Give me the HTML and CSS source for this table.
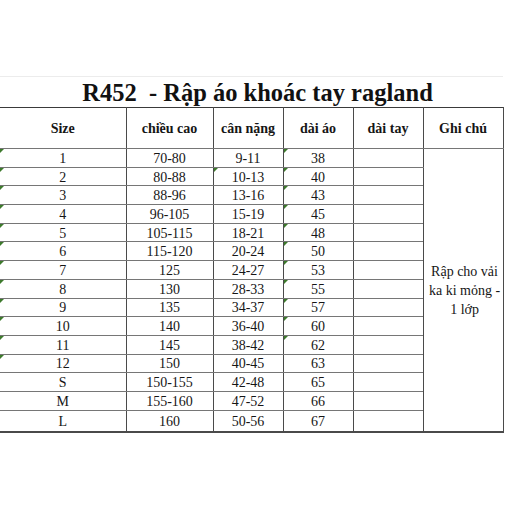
FILE: index.html
```html
<!DOCTYPE html>
<html lang="vi">
<head>
<meta charset="utf-8">
<title>R452 - Rập áo khoác tay ragland</title>
<link rel="stylesheet" href="styles.css">
</head>
<body>
<div class="sheet">
<table class="grid">
  <colgroup>
    <col class="c-size"><col class="c-h"><col class="c-w"><col class="c-a"><col class="c-t"><col class="c-n">
  </colgroup>
  <tr class="title-row"><td colspan="6" class="title">R452&nbsp;&nbsp;- Rập áo khoác tay ragland</td></tr>
  <tr class="head">
    <th>Size</th><th>chiều cao</th><th>cân nặng</th><th>dài áo</th><th>dài tay</th><th class="last">Ghi chú</th>
  </tr>
  <tr class="row"><td class="first t">1</td><td>70-80</td><td>9-11</td><td class="t">38</td><td></td>
    <td class="note last" rowspan="15">Rập cho vải<br>ka ki mỏng -<br>1 lớp</td></tr>
  <tr class="row"><td class="first t">2</td><td>80-88</td><td class="t">10-13</td><td class="t">40</td><td></td></tr>
  <tr class="row"><td class="first t">3</td><td>88-96</td><td>13-16</td><td class="t">43</td><td></td></tr>
  <tr class="row"><td class="first t">4</td><td>96-105</td><td>15-19</td><td class="t">45</td><td></td></tr>
  <tr class="row"><td class="first t">5</td><td>105-115</td><td>18-21</td><td class="t">48</td><td></td></tr>
  <tr class="row"><td class="first t">6</td><td>115-120</td><td>20-24</td><td class="t">50</td><td></td></tr>
  <tr class="row"><td class="first t">7</td><td>125</td><td>24-27</td><td class="t">53</td><td></td></tr>
  <tr class="row"><td class="first t">8</td><td>130</td><td>28-33</td><td class="t">55</td><td></td></tr>
  <tr class="row"><td class="first t">9</td><td>135</td><td>34-37</td><td class="t">57</td><td></td></tr>
  <tr class="row"><td class="first t">10</td><td>140</td><td>36-40</td><td class="t">60</td><td></td></tr>
  <tr class="row"><td class="first t">11</td><td>145</td><td>38-42</td><td class="t">62</td><td></td></tr>
  <tr class="row"><td class="first t">12</td><td>150</td><td>40-45</td><td>63</td><td></td></tr>
  <tr class="row"><td class="first">S</td><td>150-155</td><td>42-48</td><td>65</td><td></td></tr>
  <tr class="row"><td class="first">M</td><td>155-160</td><td>47-52</td><td>66</td><td></td></tr>
  <tr class="row final"><td class="first">L</td><td>160</td><td>50-56</td><td>67</td><td></td></tr>
</table>
</div>
</body>
</html>
```
FILE: styles.css
```css
html, body {
  margin: 0;
  padding: 0;
  background: #ffffff;
}
.sheet {
  padding-top: 76px;
  width: 510px;
  height: 434px;
  font-family: "Liberation Serif", "Times New Roman", serif;
  color: #161616;
}
.grid {
  border-collapse: collapse;
  table-layout: fixed;
  width: 503px;
}
.c-size { width: 126px; }
.c-h { width: 87px; }
.c-w { width: 70px; }
.c-a { width: 70px; }
.c-t { width: 70px; }
.c-n { width: 80px; }

.grid td, .grid th {
  padding: 0;
  text-align: center;
  vertical-align: middle;
  border-left: 1px solid #4a4a4a;
  border-right: 1px solid #4a4a4a;
  border-bottom: 1px solid #767676;
  font-size: 14px;
  line-height: 14px;
  position: relative;
}
.grid .first { border-left: none; }

.title-row { height: 31px; }
.title-row td.title {
  border: none;
  border-top: 1px solid #ececec;
  font-size: 24.5px;
  font-weight: bold;
  line-height: 26px;
  padding: 0 0 1px 12px;
  color: #111;
  vertical-align: bottom;
}
.head { height: 41px; }
.head th {
  font-weight: bold;
  border-top: 1px solid #3a3a3a;
  padding-top: 2px;
}
.head th:first-child { border-left: none; }
.row { height: 18.7px; }
.row td { padding-top: 2px; }
.row.final { height: 22px; }
.row.final td { border-bottom: 2px solid #4a4a4a; }
.grid td.note {
  border-bottom: 2px solid #4a4a4a;
  line-height: 19px;
  padding: 0 0 0 3px;
}
.grid td.t::before {
  content: "";
  position: absolute;
  left: 0;
  top: 0;
  width: 0;
  height: 0;
  border-top: 4px solid #3d7a2c;
  border-right: 4px solid transparent;
}
```
